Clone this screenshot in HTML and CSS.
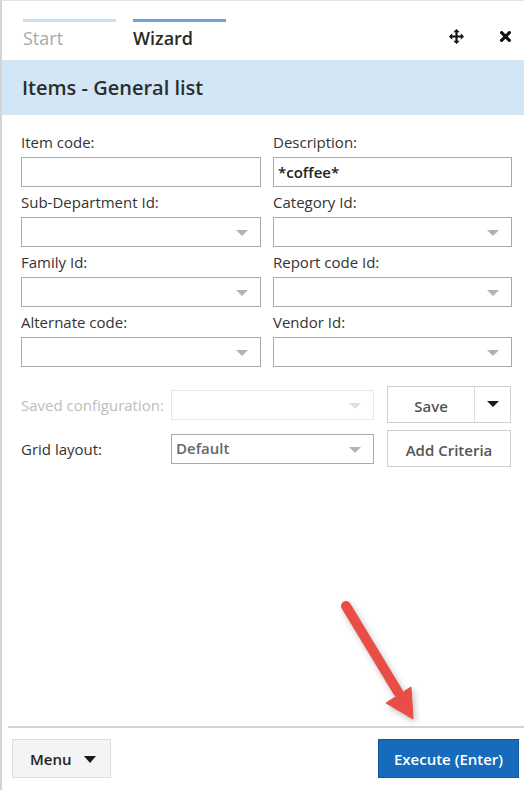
FILE: index.html
```html
<!DOCTYPE html>
<html>
<head>
<meta charset="utf-8">
<link rel="stylesheet" href="styles.css">
</head>
<body>
<div class="panel">
  <div class="tabs">
    <div class="tab tab-start">Start</div>
    <div class="tab tab-wizard">Wizard</div>
    <div class="tab-icons">
      <svg class="icon-move" width="15" height="15" viewBox="0 0 14 14"><path d="M7 0 L10 3 H8 V6 H11 V4 L14 7 L11 10 V8 H8 V11 H10 L7 14 L4 11 H6 V8 H3 V10 L0 7 L3 4 V6 H6 V3 H4 Z" fill="#111"/></svg>
      <svg class="icon-close" width="11" height="11" viewBox="0 0 10 10"><path d="M1.5 1.5 L8.5 8.5 M8.5 1.5 L1.5 8.5" stroke="#111" stroke-width="2.8" stroke-linecap="square"/></svg>
    </div>
  </div>
  <div class="header">Items - General list</div>
  <div class="form">
    <div class="grid">
      <div class="field"><div class="label">Item code:</div><div class="input"></div></div>
      <div class="field"><div class="label">Description:</div><div class="input value">*coffee*</div></div>
      <div class="field"><div class="label">Sub-Department Id:</div><div class="input select"><span class="caret"></span></div></div>
      <div class="field"><div class="label">Category Id:</div><div class="input select"><span class="caret"></span></div></div>
      <div class="field"><div class="label">Family Id:</div><div class="input select"><span class="caret"></span></div></div>
      <div class="field"><div class="label">Report code Id:</div><div class="input select"><span class="caret"></span></div></div>
      <div class="field"><div class="label">Alternate code:</div><div class="input select"><span class="caret"></span></div></div>
      <div class="field"><div class="label">Vendor Id:</div><div class="input select"><span class="caret"></span></div></div>
    </div>
    <div class="config">
      <div class="config-row">
        <div class="clabel disabled">Saved configuration:</div>
        <div class="input select cselect disabled-sel"><span class="caret"></span></div>
        <div class="btn split"><span class="split-main">Save</span><span class="split-drop"><span class="caret dark"></span></span></div>
      </div>
      <div class="config-row">
        <div class="clabel">Grid layout:</div>
        <div class="input select cselect value-sel">Default<span class="caret"></span></div>
        <div class="btn">Add Criteria</div>
      </div>
    </div>
  </div>
  <div class="footer">
    <div class="fbtn menu">Menu<span class="caret dark"></span></div>
    <div class="fbtn execute">Execute (Enter)</div>
  </div>
  <svg class="arrow" width="524" height="790" viewBox="0 0 524 790">
    <g fill="#e84d46" stroke="#e84d46">
      <line x1="346" y1="606" x2="398" y2="692" stroke-width="10" stroke-linecap="round"/>
      <polygon points="413,719 386,703 411,687" stroke-width="1" stroke-linejoin="round"/>
    </g>
  </svg>
</div>
</body>
</html>
```

FILE: styles.css
```css
* { box-sizing: border-box; }
html, body { margin: 0; padding: 0; background: #fff; }
body {
  font-family: "Open Sans", "Noto Sans", sans-serif;
  color: #333;
  width: 524px;
  height: 790px;
  overflow: hidden;
}
.panel {
  position: relative;
  width: 524px;
  height: 790px;
  border-left: 2px solid #d4d4d4;
  border-top: 1px solid #e2e2e2;
  display: flex;
  flex-direction: column;
}
.tabs {
  height: 59px;
  display: flex;
  align-items: flex-start;
  padding-left: 21px;
}
.tab {
  width: 93px;
  margin-top: 18px;
  border-top: 3px solid #c8e0f4;
  font-size: 18px;
  line-height: 26px;
  padding-top: 3px;
  margin-right: 17px;
}
.tab-start { color: #a9a9a9; }
.tab-wizard { color: #2a2a2a; border-top-color: #6aa6dc; font-weight: 600; }
.tab-icons {
  margin-left: auto;
  display: flex;
  align-items: center;
  height: 70px;
}
.icon-move { margin-right: 36px; }
.icon-close { margin-right: 13px; }
.header {
  height: 55px;
  background: #d2e6f6;
  font-size: 20px;
  font-weight: 600;
  color: #2d2d2d;
  padding-left: 20px;
  display: flex;
  align-items: center;
}
.form {
  flex: 1;
  padding: 12px 11px 0 19px;
}
.grid {
  display: grid;
  grid-template-columns: 240px 239px;
  column-gap: 12px;
}
.label {
  height: 30px;
  line-height: 30px;
  font-size: 15px;
  color: #333;
}
.input {
  height: 30px;
  border: 1px solid #ababab;
  position: relative;
  background: #fff;
}
.input.value {
  font-size: 15px;
  font-weight: 600;
  color: #222;
  line-height: 28px;
  padding-left: 4px;
}
.caret {
  position: absolute;
  right: 12px;
  top: 12px;
  width: 0;
  height: 0;
  border-left: 6px solid transparent;
  border-right: 6px solid transparent;
  border-top: 6px solid #b3b3b3;
}
.caret.dark { border-top-color: #1a1a1a; }
.config { margin-top: 19px; display: flex; flex-direction: column; gap: 7px; }
.config-row {
  display: flex;
  align-items: center;
  height: 37px;
}
.clabel {
  width: 150px;
  font-size: 15px;
  color: #333;
}
.clabel.disabled { color: #bdbdbd; }
.cselect { width: 203px; }
.disabled-sel { border-color: #e6e6e6; }
.disabled-sel .caret { border-top-color: #e0e0e0; }
.value-sel {
  font-size: 15px;
  font-weight: 600;
  color: #666;
  line-height: 27px;
  padding-left: 4px;
}
.btn {
  margin-left: 13px;
  width: 124px;
  height: 37px;
  border: 1px solid #cfcfcf;
  display: flex;
  align-items: center;
  justify-content: center;
  font-size: 15px;
  font-weight: 600;
  color: #555;
  padding-top: 2px;
}
.split { padding-top: 0; justify-content: stretch; }
.split-main {
  flex: 1;
  height: 100%;
  display: flex;
  align-items: center;
  justify-content: center;
  padding-top: 2px;
  border-right: 1px solid #dcdcdc;
}
.split-drop {
  width: 35px;
  height: 100%;
  position: relative;
}
.split-drop .caret { right: 11px; top: 14px; }
.footer {
  margin-left: 6px;
  border-top: 2px solid #d4d4d4;
  height: 64px;
  padding: 11px 5px 0 4px;
  display: flex;
  justify-content: space-between;
  align-items: flex-start;
}
.fbtn {
  height: 39px;
  display: flex;
  align-items: center;
  font-size: 15px;
  font-weight: 600;
  position: relative;
}
.menu {
  width: 99px;
  background: #f4f4f4;
  border: 1px solid #dedede;
  color: #222;
  padding-left: 17px;
}
.menu .caret { right: 14px; top: 16px; border-top-width: 7px; }
.execute {
  width: 141px;
  background: #166bbd;
  border: 1px solid #0f5ba3;
  color: #fff;
  justify-content: center;
}
.arrow {
  position: absolute;
  left: -2px;
  top: -1px;
  pointer-events: none;
  filter: drop-shadow(2px 3px 3px rgba(0,0,0,0.25));
}
```
